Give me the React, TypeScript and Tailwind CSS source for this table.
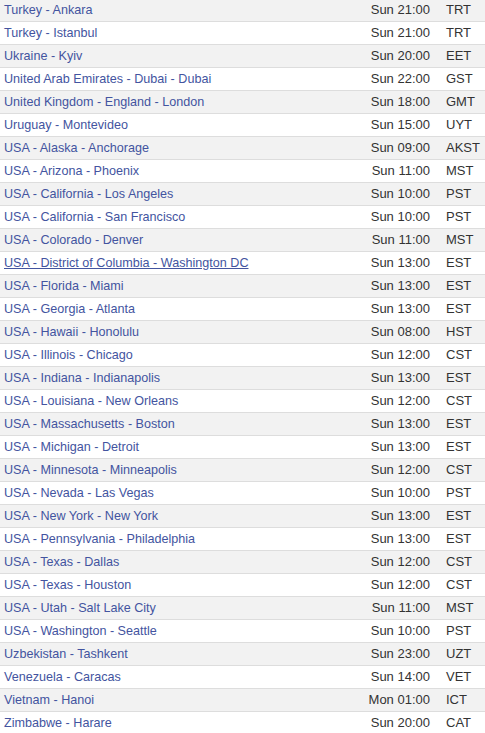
const rows: [string, string, string][] = [
  ['Turkey - Ankara', 'Sun 21:00', 'TRT'],
  ['Turkey - Istanbul', 'Sun 21:00', 'TRT'],
  ['Ukraine - Kyiv', 'Sun 20:00', 'EET'],
  ['United Arab Emirates - Dubai - Dubai', 'Sun 22:00', 'GST'],
  ['United Kingdom - England - London', 'Sun 18:00', 'GMT'],
  ['Uruguay - Montevideo', 'Sun 15:00', 'UYT'],
  ['USA - Alaska - Anchorage', 'Sun 09:00', 'AKST'],
  ['USA - Arizona - Phoenix', 'Sun 11:00', 'MST'],
  ['USA - California - Los Angeles', 'Sun 10:00', 'PST'],
  ['USA - California - San Francisco', 'Sun 10:00', 'PST'],
  ['USA - Colorado - Denver', 'Sun 11:00', 'MST'],
  ['USA - District of Columbia - Washington DC', 'Sun 13:00', 'EST'],
  ['USA - Florida - Miami', 'Sun 13:00', 'EST'],
  ['USA - Georgia - Atlanta', 'Sun 13:00', 'EST'],
  ['USA - Hawaii - Honolulu', 'Sun 08:00', 'HST'],
  ['USA - Illinois - Chicago', 'Sun 12:00', 'CST'],
  ['USA - Indiana - Indianapolis', 'Sun 13:00', 'EST'],
  ['USA - Louisiana - New Orleans', 'Sun 12:00', 'CST'],
  ['USA - Massachusetts - Boston', 'Sun 13:00', 'EST'],
  ['USA - Michigan - Detroit', 'Sun 13:00', 'EST'],
  ['USA - Minnesota - Minneapolis', 'Sun 12:00', 'CST'],
  ['USA - Nevada - Las Vegas', 'Sun 10:00', 'PST'],
  ['USA - New York - New York', 'Sun 13:00', 'EST'],
  ['USA - Pennsylvania - Philadelphia', 'Sun 13:00', 'EST'],
  ['USA - Texas - Dallas', 'Sun 12:00', 'CST'],
  ['USA - Texas - Houston', 'Sun 12:00', 'CST'],
  ['USA - Utah - Salt Lake City', 'Sun 11:00', 'MST'],
  ['USA - Washington - Seattle', 'Sun 10:00', 'PST'],
  ['Uzbekistan - Tashkent', 'Sun 23:00', 'UZT'],
  ['Venezuela - Caracas', 'Sun 14:00', 'VET'],
  ['Vietnam - Hanoi', 'Mon 01:00', 'ICT'],
  ['Zimbabwe - Harare', 'Sun 20:00', 'CAT'],
];

export default function App() {
  return (
    <div className="h-[733px] w-[485px] overflow-hidden bg-white font-['Liberation_Sans',Arial,sans-serif] text-[12.6px]">
      <div className="-mt-[1px]">
        {rows.map(([place, time, tz], i) => (
          <div
            key={place}
            className={`flex h-[23px] items-center border-b border-[#dddddd] ${
              i % 2 === 0 ? 'bg-[#f2f2f2]' : 'bg-white'
            }`}
          >
            <a
              href="#"
              className={`flex-1 pl-[4px] text-[#4354a0] ${i === 11 ? 'underline' : 'no-underline'}`}
            >
              {place}
            </a>
            <span className="w-[100px] text-right text-[13px] text-[#333333]">{time}</span>
            <span className="w-[55px] pl-[16px] text-[13px] text-[#333333]">{tz}</span>
          </div>
        ))}
      </div>
    </div>
  );
}
